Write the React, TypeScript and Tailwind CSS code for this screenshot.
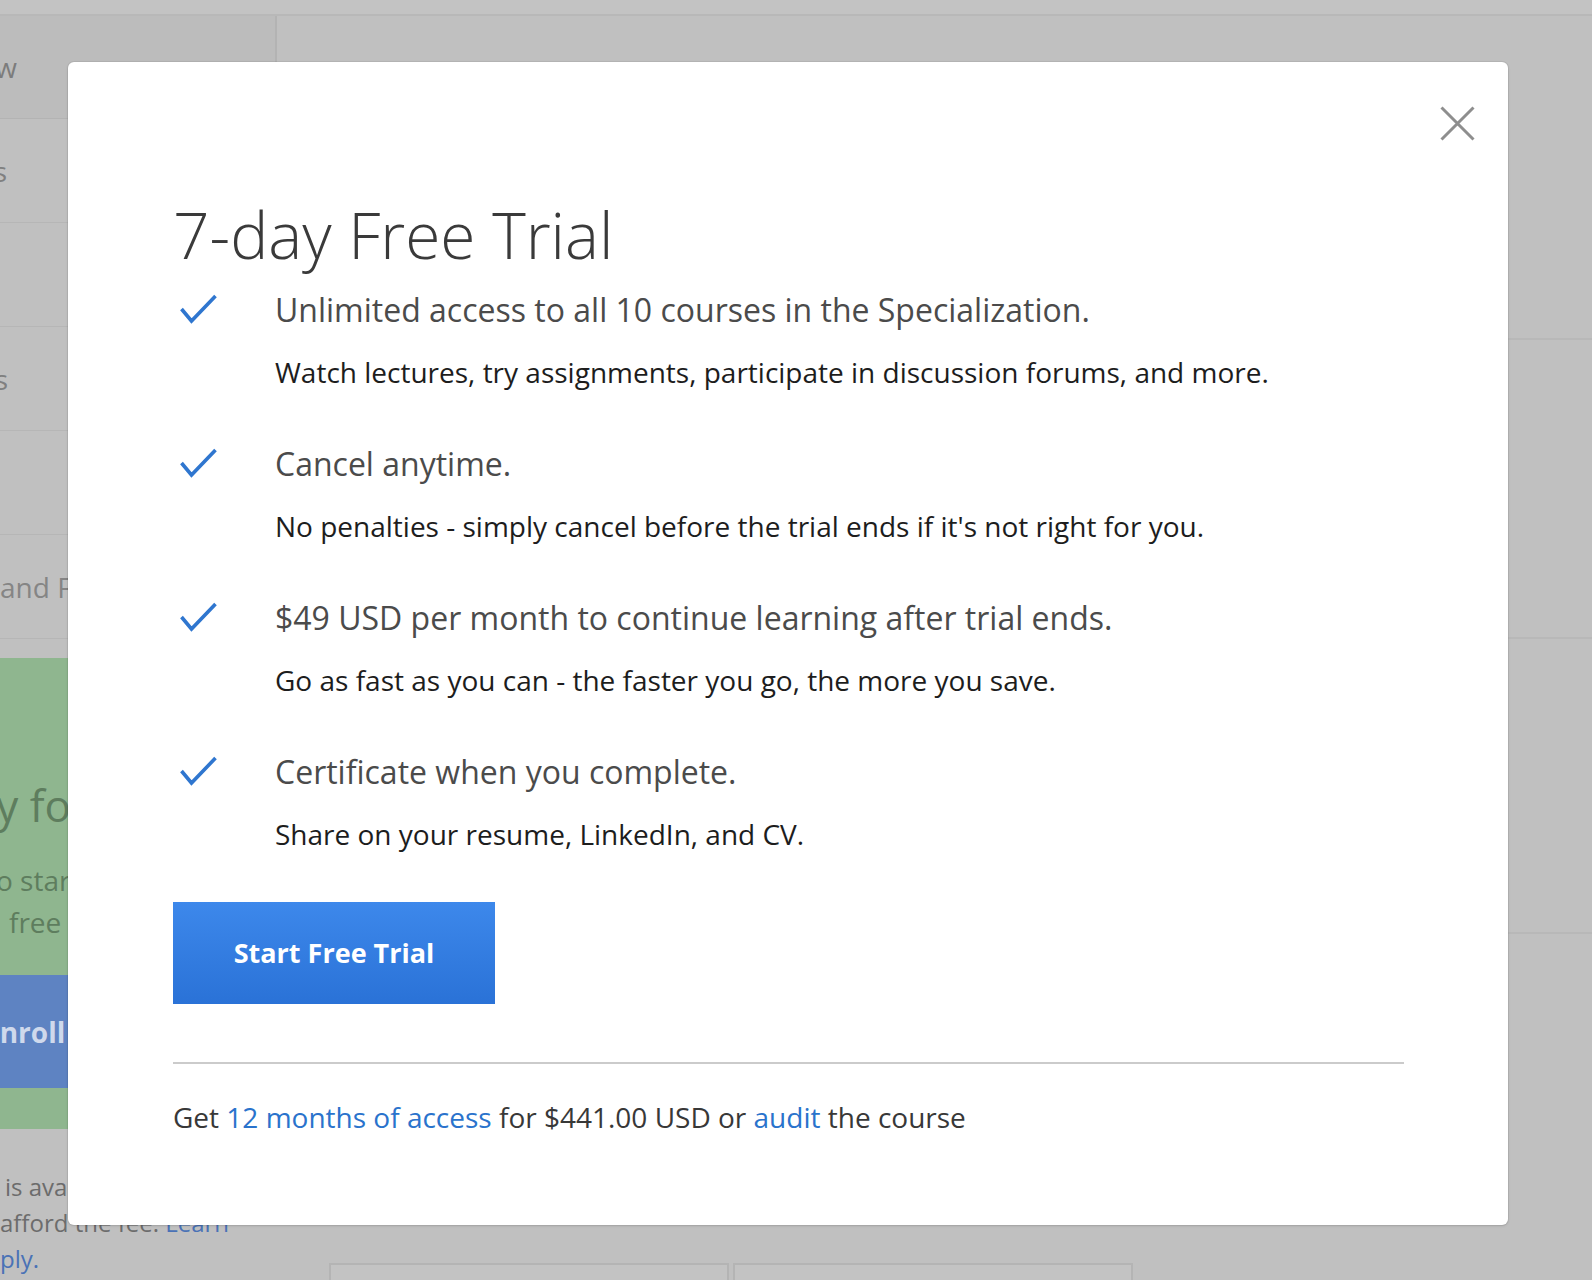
import React from "react";

function Check() {
  return (
    <svg width="37" height="30" viewBox="0 0 37 30" className="shrink-0">
      <path d="M1.5 15 L11.5 27 L35.5 2" fill="none" stroke="#2f76cf" strokeWidth="3.6" strokeLinecap="butt" strokeLinejoin="miter" />
    </svg>
  );
}

const items = [
  {
    h: "Unlimited access to all 10 courses in the Specialization.",
    s: "Watch lectures, try assignments, participate in discussion forums, and more.",
  },
  {
    h: "Cancel anytime.",
    s: "No penalties - simply cancel before the trial ends if it's not right for you.",
  },
  {
    h: "$49 USD per month to continue learning after trial ends.",
    s: "Go as fast as you can - the faster you go, the more you save.",
  },
  {
    h: "Certificate when you complete.",
    s: "Share on your resume, LinkedIn, and CV.",
  },
];

function SideRow({ children, dark }: { children?: React.ReactNode; dark?: boolean }) {
  return (
    <div
      className={
        dark
          ? "flex h-[103px] items-center border-b border-r-2 border-[#b3b3b3] bg-[#bcbcbc]"
          : "flex h-[104px] items-center border-b border-[#b6b6b6]"
      }
    >
      {children}
    </div>
  );
}

export default function App() {
  return (
    <div className="relative h-[1280px] w-[1592px] overflow-hidden bg-[#c0c0c0] font-['Open_Sans',sans-serif]">
      {/* background page */}
      <div className="h-[16px] border-b-2 border-[#b8b8b8] bg-[#c3c3c3]" />
      <div className="flex">
        <aside className="flex w-[277px] shrink-0 flex-col">
          <SideRow dark>
            <div className="flex w-[17px] justify-end overflow-hidden whitespace-nowrap text-[28px] text-[#7c7c7c]">
              <span>Overview</span>
            </div>
          </SideRow>
          <SideRow>
            <div className="flex w-[7px] justify-end overflow-hidden whitespace-nowrap text-[28px] text-[#808080]">
              <span>Courses</span>
            </div>
          </SideRow>
          <SideRow />
          <SideRow>
            <div className="flex w-[8px] justify-end overflow-hidden whitespace-nowrap text-[28px] text-[#808080]">
              <span>Instructors</span>
            </div>
          </SideRow>
          <SideRow />
          <SideRow>
            <div className="whitespace-nowrap text-[28px] text-[#858585]">and Feedback</div>
          </SideRow>

          <div className="mt-[19px] flex h-[471px] flex-col overflow-hidden bg-[#8fb68f]">
            <div className="mt-[118px] -ml-[107px] whitespace-nowrap text-[44px] leading-[58px] text-[#5e7d5e]">
              Ready for a challenge?
            </div>
            <div className="mt-[25px] -ml-[4px] whitespace-nowrap text-[28px] leading-[42px] text-[#5e7d5e]">
              o start your 7-day
            </div>
            <div className="ml-[9px] whitespace-nowrap text-[28px] leading-[42px] text-[#5e7d5e]">
              free trial today
            </div>
            <div className="mt-[32px] flex h-[113px] items-center bg-[#5e83c2]">
              <span className="-ml-[16px] whitespace-nowrap text-[28px] font-bold text-[#cfd9ec]">
                Enroll for Free
              </span>
            </div>
          </div>

          <div className="mt-[40px] flex flex-col text-[24px] leading-[36px] text-[#6c6c6c]">
            <span className="ml-[5px] whitespace-nowrap">is available for learners who</span>
            <span className="whitespace-nowrap">
              afford the fee. <span className="text-[#4a72b6]">Learn</span>
            </span>
            <span className="-ml-[28px] whitespace-nowrap text-[#4a72b6]">apply.</span>
          </div>
        </aside>

        <main className="flex flex-1 flex-col">
          <div className="h-[324px] border-b-2 border-[#b8b8b8]" />
          <div className="h-[299px] border-b-2 border-[#b8b8b8]" />
          <div className="h-[295px] border-b-2 border-[#b8b8b8]" />
          <div className="mt-[329px] flex gap-[4px] pl-[52px]">
            <div className="h-[200px] w-[400px] border-2 border-[#b4b4b4] bg-[#c3c3c3]" />
            <div className="h-[200px] w-[400px] border-2 border-[#b4b4b4] bg-[#c3c3c3]" />
          </div>
        </main>
      </div>

      {/* modal overlay */}
      <div className="absolute left-[68px] top-[62px] flex h-[1163px] w-[1440px] flex-col rounded-[6px] bg-white pl-[105px] pr-[104px] pt-[141px] shadow-[0_0_0_1px_rgba(0,0,0,0.05),0_1px_3px_rgba(0,0,0,0.12)]">
        <button className="absolute right-[33px] top-[44px] h-[35px] w-[35px]" aria-label="Close">
          <svg width="35" height="35" viewBox="0 0 35 35">
            <path d="M1.5 1.5 L33.5 33.5 M33.5 1.5 L1.5 33.5" stroke="#8e8e8e" strokeWidth="3" fill="none" />
          </svg>
        </button>

        <h1 className="text-[64px] font-light leading-[64px] text-[#3a3a3a]">7-day Free Trial</h1>

        <ul className="mt-[27px] flex flex-col gap-[62px]">
          {items.map((it) => (
            <li key={it.h} className="flex">
              <div className="w-[102px] shrink-0 pl-[7px]">
                <Check />
              </div>
              <div className="flex flex-col">
                <div className="whitespace-nowrap text-[32px] leading-[32px] text-[#4b4b4b]">{it.h}</div>
                <div className="mt-[32px] whitespace-nowrap text-[28px] leading-[28px] text-[#1d1d1d]">{it.s}</div>
              </div>
            </li>
          ))}
        </ul>

        <button className="mt-[54px] flex h-[102px] w-[322px] items-center justify-center bg-gradient-to-b from-[#3d88eb] to-[#2a72d7] text-[27px] font-bold text-white">
          Start Free Trial
        </button>

        <div className="mt-[58px] h-[2px] bg-[#cbcbcb]" />

        <p className="mt-[39px] whitespace-nowrap text-[28px] leading-[28px] text-[#383838]">
          Get <span className="text-[#2a73cc]">12 months of access</span> for $441.00 USD or{" "}
          <span className="text-[#2a73cc]">audit</span> the course
        </p>
      </div>
    </div>
  );
}
